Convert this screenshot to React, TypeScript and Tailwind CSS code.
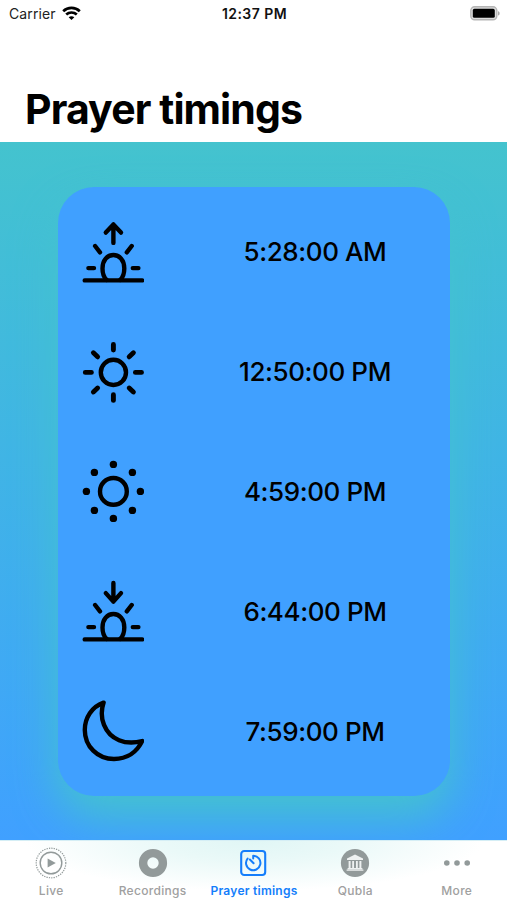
import type { ReactNode } from "react";

const SunHorizon = () => (
	<>
		<path d="M-18.3 -6.4L-13.4 -.1M18.3 -6.4L13.4 -.1M-25 15.7H-19.4M25 15.7H19.4M-28.7 28H28.7" />
		<path d="M-6.8 27.5C-9.6 24.8-10.9 20.5-10.9 16C-10.9 7.8-6 2.6 0 2.6S10.9 7.8 10.9 16C10.9 20.5 9.6 24.8 6.8 27.5" />
	</>
);

const SunriseIcon = () => (
	<>
		<path d="M0 -9.5V-28M-7.6 -19.8L0 -28L7.6 -19.8" />
		<SunHorizon />
	</>
);

const NoonIcon = () => (
	<>
		<circle r="12.6" />
		<path
			strokeWidth="4.9"
			d="M0 -28V-22.4M0 28V22.4M-28.1 0H-22M28.1 0H22M-20 -19.6L-15.8 -15.6M20 -19.6L15.8 -15.6M-20 19.6L-15.8 15.6M20 19.6L15.8 15.6"
		/>
	</>
);

const DOTS = [
	[0, -27],
	[19, -19],
	[27, 0],
	[19, 19],
	[0, 27],
	[-19, 19],
	[-27, 0],
	[-19, -19],
];

const AfternoonIcon = () => (
	<>
		<circle r="13.4" />
		{DOTS.map(([x, y]) => (
			<circle key={`${x},${y}`} cx={x} cy={y} r="3.7" fill="currentColor" stroke="none" />
		))}
	</>
);

const SunsetIcon = () => (
	<>
		<path d="M0 -28.5V-9.8M-7.6 -18.3L0 -9.8L7.6 -18.3" />
		<SunHorizon />
	</>
);

const MoonIcon = () => (
	<path d="M-9.8 -28.8C-21.5 -24.6-28.6 -14-28.6 -1.5C-28.6 15-15.8 27.6.6 27.6C13.5 27.6 23.6 20.8 28.8 9.6C12 14.2-3.5 8.2-9.4 -6.5C-12.2 -13.5-12.4 -21-9.8 -28.8Z" />
);

const PRAYERS: { time: string; icon: ReactNode }[] = [
	{ time: "5:28:00 AM", icon: <SunriseIcon /> },
	{ time: "12:50:00 PM", icon: <NoonIcon /> },
	{ time: "4:59:00 PM", icon: <AfternoonIcon /> },
	{ time: "6:44:00 PM", icon: <SunsetIcon /> },
	{ time: "7:59:00 PM", icon: <MoonIcon /> },
];

const TABS: { label: string; icon: ReactNode; active?: boolean }[] = [
	{
		label: "Live",
		icon: (
			<>
				<circle cx="16" cy="16" r="14.8" strokeWidth="1.2" strokeLinecap="butt" strokeDasharray="1.3 1.1" />
				<circle cx="16" cy="16" r="10.8" strokeWidth="1.4" />
				<path d="M12.6 11.4L20.8 16L12.6 20.6Z" fill="currentColor" stroke="none" />
			</>
		),
	},
	{
		label: "Recordings",
		icon: <circle cx="16" cy="16" r="9.9" strokeWidth="8.4" />,
	},
	{
		label: "Prayer timings",
		active: true,
		icon: (
			<>
				<rect x="3.2" y="4" width="24" height="24" rx="3" strokeWidth="2.1" />
				<path d="M15.2 8.8V11.4M15.2 8.8A7.2 7.2 0 1 1 9.6 11.5M11.9 12.5L15.6 16.2" strokeWidth="2" />
			</>
		),
	},
	{
		label: "Qubla",
		icon: (
			<>
				<circle cx="16" cy="16" r="14.1" fill="currentColor" stroke="none" />
				<g fill="#eef1f1" stroke="none">
					<path d="M16 7.6L24 11.6V13H8V11.6Z" />
					<path d="M9.6 14H11.6V21H9.6ZM13.2 14H15V21H13.2ZM17 14H18.8V21H17ZM20.4 14H22.4V21H20.4ZM8.6 21H23.4V22.2H8.6ZM7.6 22.6H24.4V23.8H7.6Z" />
				</g>
			</>
		),
	},
	{
		label: "More",
		icon: (
			<g fill="currentColor" stroke="none">
				<circle cx="5.8" cy="16" r="2.8" />
				<circle cx="16" cy="16" r="2.8" />
				<circle cx="26.2" cy="16" r="2.8" />
			</g>
		),
	},
];

const StatusBar = () => (
	<div className="grid h-7 grid-cols-3 items-center pl-[9px] pr-[7px] text-[14px] leading-none">
		<div className="flex items-center gap-[6px] text-[#222]">
			<span className="tracking-[0.1px]">Carrier</span>
			<svg className="-mt-[2px]" width="19" height="15" viewBox="0 0 19 15" fill="none" stroke="#000" strokeWidth="2.7">
				<path d="M1.2 5.2C5.8 .8 13.2 .8 17.8 5.2" />
				<path d="M4.2 8.6C7.2 5.8 11.8 5.8 14.8 8.6" />
				<path d="M6.7 11.2C8.3 9.8 10.7 9.8 12.3 11.2L9.5 14Z" fill="#000" stroke="none" />
			</svg>
		</div>
		<span className="text-center font-semibold tracking-[0.45px] text-[#111]">12:37 PM</span>
		<svg className="-mt-[2px] justify-self-end" width="30" height="15" viewBox="0 0 30 15">
			<rect x=".8" y=".8" width="26" height="13" rx="3.8" fill="#ddd" stroke="#b5b5b5" strokeWidth="1.4" />
			<rect x="2.8" y="2.8" width="22" height="9" rx="1.6" fill="#000" />
			<path d="M28 5.2C30.2 5.8 30.2 9 28 9.6Z" fill="#aaa" />
		</svg>
	</div>
);

const TabBar = () => (
	<nav className="grid h-[60px] shrink-0 grid-cols-5 border-t border-[#d5eef5] bg-white bg-[radial-gradient(ellipse_230px_50px_at_50%_0%,#e0f6f5_0%,#eaf9f8_40%,#ffffff_100%)]">
		{TABS.map(({ label, icon, active }) => (
			<div
				key={label}
				className={`flex flex-col items-center whitespace-nowrap pl-px pt-[6px] ${active ? "text-[#147efb]" : "text-[#929a9a]"}`}
			>
				<svg width="32" height="32" viewBox="0 0 32 32" fill="none" stroke="currentColor" strokeLinecap="round">
					{icon}
				</svg>
				<span className={`mt-[4px] text-[12px] leading-[15px] ${active ? "font-semibold tracking-[0.25px]" : "font-medium tracking-[0.3px] text-[#a0a0a0]"}`}>
					{label}
				</span>
			</div>
		))}
	</nav>
);

export default function App() {
	return (
		<div className="flex h-[900px] w-[507px] flex-col overflow-hidden bg-white font-[Inter,sans-serif] text-black">
			<header className="h-[142px] shrink-0">
				<StatusBar />
				<h1 className="pl-[25px] pt-[56px] text-[41px] font-bold leading-[50px] tracking-[-0.9px]">
					Prayer timings
				</h1>
			</header>
			<main className="flex min-h-0 flex-1 items-start overflow-hidden bg-linear-to-b from-[#44c3ce] to-[#40a0ff] pl-[58px] pt-[45px]">
				<div className="flex h-[609px] w-[392px] flex-col rounded-[36px] bg-[#40a0ff] py-[5px] shadow-[0_20px_44px_#44c3ce]">
					{PRAYERS.map(({ time, icon }) => (
						<div key={time} className="flex flex-1 items-center">
							<svg
								className="ml-[24px] shrink-0"
								width="62"
								height="62"
								viewBox="-31.4 -31.4 62 62"
								fill="none"
								stroke="currentColor"
								strokeWidth="4.4"
								strokeLinecap="round"
								strokeLinejoin="round"
							>
								{icon}
							</svg>
							<span className="ml-[32px] w-[278px] pl-[4px] pt-px text-center text-[26px] font-medium leading-8 tracking-[-0.4px]">
								{time}
							</span>
						</div>
					))}
				</div>
			</main>
			<TabBar />
		</div>
	);
}
